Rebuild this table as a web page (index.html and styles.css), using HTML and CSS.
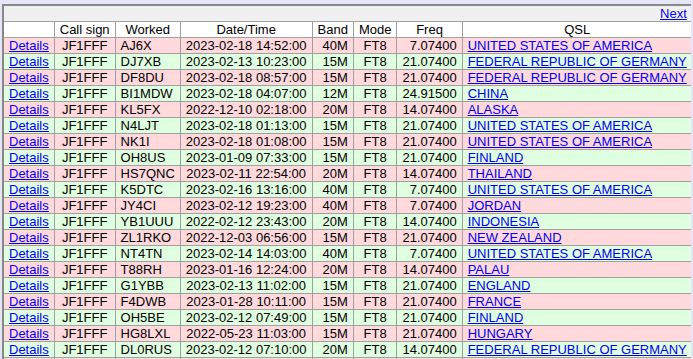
FILE: index.html
```html
<!DOCTYPE html>
<html>
<head>
<meta charset="utf-8">
<title>Log</title>
<link rel="stylesheet" href="styles.css">
</head>
<body>
<table class="log">
<tr class="nav"><td colspan="8"><a href="#">Next</a></td></tr>
<tr class="head"><th></th><th>Call sign</th><th>Worked</th><th>Date/Time</th><th>Band</th><th>Mode</th><th>Freq</th><th>QSL</th></tr>
<tr class="odd"><td class="l"><a href="#">Details</a></td><td class="c">JF1FFF</td><td class="l">AJ6X</td><td class="c">2023-02-18 14:52:00</td><td class="r">40M</td><td class="c">FT8</td><td class="r">7.07400</td><td class="l"><a href="#">UNITED STATES OF AMERICA</a></td></tr>
<tr class="even"><td class="l"><a href="#">Details</a></td><td class="c">JF1FFF</td><td class="l">DJ7XB</td><td class="c">2023-02-13 10:23:00</td><td class="r">15M</td><td class="c">FT8</td><td class="r">21.07400</td><td class="l"><a href="#">FEDERAL REPUBLIC OF GERMANY</a></td></tr>
<tr class="odd"><td class="l"><a href="#">Details</a></td><td class="c">JF1FFF</td><td class="l">DF8DU</td><td class="c">2023-02-18 08:57:00</td><td class="r">15M</td><td class="c">FT8</td><td class="r">21.07400</td><td class="l"><a href="#">FEDERAL REPUBLIC OF GERMANY</a></td></tr>
<tr class="even"><td class="l"><a href="#">Details</a></td><td class="c">JF1FFF</td><td class="l">BI1MDW</td><td class="c">2023-02-18 04:07:00</td><td class="r">12M</td><td class="c">FT8</td><td class="r">24.91500</td><td class="l"><a href="#">CHINA</a></td></tr>
<tr class="odd"><td class="l"><a href="#">Details</a></td><td class="c">JF1FFF</td><td class="l">KL5FX</td><td class="c">2022-12-10 02:18:00</td><td class="r">20M</td><td class="c">FT8</td><td class="r">14.07400</td><td class="l"><a href="#">ALASKA</a></td></tr>
<tr class="even"><td class="l"><a href="#">Details</a></td><td class="c">JF1FFF</td><td class="l">N4LJT</td><td class="c">2023-02-18 01:13:00</td><td class="r">15M</td><td class="c">FT8</td><td class="r">21.07400</td><td class="l"><a href="#">UNITED STATES OF AMERICA</a></td></tr>
<tr class="odd"><td class="l"><a href="#">Details</a></td><td class="c">JF1FFF</td><td class="l">NK1I</td><td class="c">2023-02-18 01:08:00</td><td class="r">15M</td><td class="c">FT8</td><td class="r">21.07400</td><td class="l"><a href="#">UNITED STATES OF AMERICA</a></td></tr>
<tr class="even"><td class="l"><a href="#">Details</a></td><td class="c">JF1FFF</td><td class="l">OH8US</td><td class="c">2023-01-09 07:33:00</td><td class="r">15M</td><td class="c">FT8</td><td class="r">21.07400</td><td class="l"><a href="#">FINLAND</a></td></tr>
<tr class="odd"><td class="l"><a href="#">Details</a></td><td class="c">JF1FFF</td><td class="l">HS7QNC</td><td class="c">2023-02-11 22:54:00</td><td class="r">20M</td><td class="c">FT8</td><td class="r">14.07400</td><td class="l"><a href="#">THAILAND</a></td></tr>
<tr class="even"><td class="l"><a href="#">Details</a></td><td class="c">JF1FFF</td><td class="l">K5DTC</td><td class="c">2023-02-16 13:16:00</td><td class="r">40M</td><td class="c">FT8</td><td class="r">7.07400</td><td class="l"><a href="#">UNITED STATES OF AMERICA</a></td></tr>
<tr class="odd"><td class="l"><a href="#">Details</a></td><td class="c">JF1FFF</td><td class="l">JY4CI</td><td class="c">2023-02-12 19:23:00</td><td class="r">40M</td><td class="c">FT8</td><td class="r">7.07400</td><td class="l"><a href="#">JORDAN</a></td></tr>
<tr class="even"><td class="l"><a href="#">Details</a></td><td class="c">JF1FFF</td><td class="l">YB1UUU</td><td class="c">2022-02-12 23:43:00</td><td class="r">20M</td><td class="c">FT8</td><td class="r">14.07400</td><td class="l"><a href="#">INDONESIA</a></td></tr>
<tr class="odd"><td class="l"><a href="#">Details</a></td><td class="c">JF1FFF</td><td class="l">ZL1RKO</td><td class="c">2022-12-03 06:56:00</td><td class="r">15M</td><td class="c">FT8</td><td class="r">21.07400</td><td class="l"><a href="#">NEW ZEALAND</a></td></tr>
<tr class="even"><td class="l"><a href="#">Details</a></td><td class="c">JF1FFF</td><td class="l">NT4TN</td><td class="c">2023-02-14 14:03:00</td><td class="r">40M</td><td class="c">FT8</td><td class="r">7.07400</td><td class="l"><a href="#">UNITED STATES OF AMERICA</a></td></tr>
<tr class="odd"><td class="l"><a href="#">Details</a></td><td class="c">JF1FFF</td><td class="l">T88RH</td><td class="c">2023-01-16 12:24:00</td><td class="r">20M</td><td class="c">FT8</td><td class="r">14.07400</td><td class="l"><a href="#">PALAU</a></td></tr>
<tr class="even"><td class="l"><a href="#">Details</a></td><td class="c">JF1FFF</td><td class="l">G1YBB</td><td class="c">2023-02-13 11:02:00</td><td class="r">15M</td><td class="c">FT8</td><td class="r">21.07400</td><td class="l"><a href="#">ENGLAND</a></td></tr>
<tr class="odd"><td class="l"><a href="#">Details</a></td><td class="c">JF1FFF</td><td class="l">F4DWB</td><td class="c">2023-01-28 10:11:00</td><td class="r">15M</td><td class="c">FT8</td><td class="r">21.07400</td><td class="l"><a href="#">FRANCE</a></td></tr>
<tr class="even"><td class="l"><a href="#">Details</a></td><td class="c">JF1FFF</td><td class="l">OH5BE</td><td class="c">2023-02-12 07:49:00</td><td class="r">15M</td><td class="c">FT8</td><td class="r">21.07400</td><td class="l"><a href="#">FINLAND</a></td></tr>
<tr class="odd"><td class="l"><a href="#">Details</a></td><td class="c">JF1FFF</td><td class="l">HG8LXL</td><td class="c">2022-05-23 11:03:00</td><td class="r">15M</td><td class="c">FT8</td><td class="r">21.07400</td><td class="l"><a href="#">HUNGARY</a></td></tr>
<tr class="even"><td class="l"><a href="#">Details</a></td><td class="c">JF1FFF</td><td class="l">DL0RUS</td><td class="c">2023-02-12 07:10:00</td><td class="r">20M</td><td class="c">FT8</td><td class="r">14.07400</td><td class="l"><a href="#">FEDERAL REPUBLIC OF GERMANY</a></td></tr>
<tr class="odd"><td class="l"><a href="#">Details</a></td><td class="c">JF1FFF</td><td class="l">SP9XCN</td><td class="c">2023-02-12 06:58:00</td><td class="r">15M</td><td class="c">FT8</td><td class="r">21.07400</td><td class="l"><a href="#">POLAND</a></td></tr>
</table>
</body>
</html>
```

FILE: styles.css
```css
html, body {
  background: #e6e6fa;
}
body {
  margin: 4px 2px 2px 2px;
  font-family: "Liberation Sans", Arial, sans-serif;
  font-size: 13px;
  line-height: 15px;
  color: #000;
}
a {
  color: #0000ee;
}
.log {
  width: 100%;
  border-collapse: collapse;
  border: 2px solid #888;
}
.log td, .log th {
  border: 1px solid #a0a0a0;
  padding: 0 5px;
  white-space: nowrap;
}
.log th {
  font-weight: normal;
  text-align: center;
  background: #fff;
}
.nav td {
  background: #f0f0f0;
  text-align: right;
  border-left: none;
  border-right: none;
}
.odd td {
  background: #ffd9dc;
}
.even td {
  background: #e0ffe0;
}
.l { text-align: left; }
.c { text-align: center; }
.r { text-align: right; }
```
